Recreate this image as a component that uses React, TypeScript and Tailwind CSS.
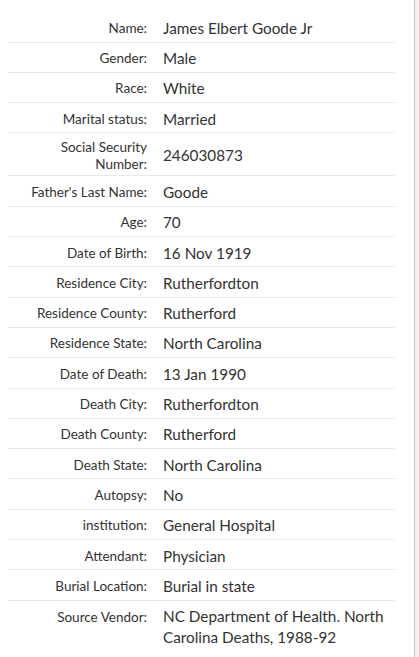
import React from "react";

const rows: { label: React.ReactNode; value: React.ReactNode; tall?: boolean; last?: boolean }[] = [
  { label: "Name:", value: "James Elbert Goode Jr" },
  { label: "Gender:", value: "Male" },
  { label: "Race:", value: "White" },
  { label: "Marital status:", value: "Married" },
  { label: <>Social Security<br />Number:</>, value: "246030873", tall: true },
  { label: "Father's Last Name:", value: "Goode" },
  { label: "Age:", value: "70" },
  { label: "Date of Birth:", value: "16 Nov 1919" },
  { label: "Residence City:", value: "Rutherfordton" },
  { label: "Residence County:", value: "Rutherford" },
  { label: "Residence State:", value: "North Carolina" },
  { label: "Date of Death:", value: "13 Jan 1990" },
  { label: "Death City:", value: "Rutherfordton" },
  { label: "Death County:", value: "Rutherford" },
  { label: "Death State:", value: "North Carolina" },
  { label: "Autopsy:", value: "No" },
  { label: "institution:", value: "General Hospital" },
  { label: "Attendant:", value: "Physician" },
  { label: "Burial Location:", value: "Burial in state" },
  { label: "Source Vendor:", value: "NC Department of Health. North Carolina Deaths, 1988-92", last: true },
];

export default function App() {
  return (
    <div
      className="flex h-[657px] w-[419px] overflow-hidden bg-white text-[#333]"
      style={{ fontFamily: "Lato, 'Liberation Sans', sans-serif" }}
    >
      <div className="w-[414px] pl-[8px] pt-[12.3px]">
        <div className="w-[387px]">
          {rows.map((r, i) => (
            <div
              key={i}
              className={
                "flex pt-[5.5px] pb-[2.5px] " +
                (r.last ? "items-start" : "items-center border-b border-[#e8e8e8]")
              }
            >
              <div
                className={
                  "w-[139px] shrink-0 text-right text-[13.5px] " +
                  (r.tall ? "leading-[17px]" : r.last ? "leading-[21.3px] pt-[1px]" : "leading-[21.3px]")
                }
              >
                {r.label}
              </div>
              <div className="ml-[16px] w-[232px] text-[15.3px] leading-[21.3px]">
                {r.value}
              </div>
            </div>
          ))}
        </div>
      </div>
      <div className="w-px bg-[#c8c8c8]" />
      <div className="flex-1 bg-[#f1f1f1]" />
    </div>
  );
}
